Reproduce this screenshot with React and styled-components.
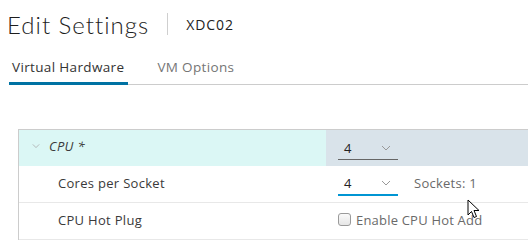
import React from "react";
import styled, { createGlobalStyle } from "styled-components";

const Global = createGlobalStyle`
  html, body { margin: 0; padding: 0; background: #fff; }
  body { font-family: "Open Sans", Lato, sans-serif; overflow: hidden; width: 528px; height: 246px; }
`;

const Page = styled.div`
  position: relative;
  width: 528px;
  height: 246px;
  overflow: hidden;
`;

const Header = styled.div`
  display: flex;
  align-items: center;
  height: 44px;
  padding: 4px 0 0 7px;
  box-sizing: border-box;
`;

const Title = styled.h1`
  margin: 0;
  font-family: Lato, sans-serif;
  font-size: 24px;
  font-weight: 300;
  color: #1d1d1d;
  letter-spacing: 1px;
`;

const Divider = styled.span`
  width: 1px;
  height: 22px;
  background: #cfcfcf;
  margin: 0 18px 0 18px;
`;

const Sub = styled.span`
  font-size: 14px;
  color: #222;
  letter-spacing: 0.9px;
  margin-top: 1px;
`;

const Tabs = styled.div`
  display: flex;
  margin: 12px 0 0 9px;
  border-bottom: 1px solid #cccccc;
  height: 28px;
  align-items: stretch;
`;

const Tab = styled.div`
  font-size: 13.5px;
  padding: 2px 4px 0 3px;
  margin-right: 26px;
  color: ${(p) => (p.$active ? "#333" : "#757575")};
  box-shadow: ${(p) => (p.$active ? "inset 0 -3px 0 #0072a3" : "none")};
  margin-bottom: -1px;
  letter-spacing: 0.35px;
`;

const Table = styled.div`
  margin: 44px 0 0 18px;
  width: 560px;
  border-top: 1px solid #cccccc;
  border-left: 1px solid #cccccc;
`;

const Row = styled.div`
  display: grid;
  grid-template-columns: 307px 1fr;
  height: 36px;
  border-bottom: ${(p) => (p.$head ? "none" : "1px solid #e8e8e8")};
`;

const Label = styled.div`
  display: flex;
  align-items: center;
  padding-left: ${(p) => (p.$head ? "13px" : "39px")};
  padding-bottom: ${(p) => (p.$head ? "4px" : "3px")};
  font-size: 13px;
  color: #3a3a3a;
  letter-spacing: 0.3px;
  font-style: ${(p) => (p.$head ? "italic" : "normal")};
  background: ${(p) => (p.$head ? "#dbf7f5" : "transparent")};
  gap: 9px;
`;

const Value = styled.div`
  display: flex;
  align-items: center;
  padding-left: 12px;
  gap: 16px;
  background: ${(p) => (p.$head ? "#d9e3ea" : "transparent")};
`;

const Select = styled.div`
  width: 60px;
  height: 22px;
  box-sizing: border-box;
  display: flex;
  align-items: center;
  justify-content: space-between;
  padding: 0 7px 1px 6px;
  font-size: 13px;
  color: #222;
  border-bottom: ${(p) => (p.$focus ? "2px solid #0095d3" : "1px solid #666")};
  margin-top: ${(p) => (p.$focus ? "1px" : "2px")};
`;

const Note = styled.span`
  font-size: 13px;
  color: #6a6a6a;
  letter-spacing: 0.25px;
  margin-bottom: 3px;
`;

const CheckWrap = styled.label`
  display: flex;
  align-items: center;
  gap: 5px;
  font-size: 13px;
  color: #6a6a6a;
  margin-bottom: 2px;
  letter-spacing: 0.2px;
`;

const Box = styled.span`
  width: 11px;
  height: 11px;
  border: 1px solid #9a9a9a;
  border-radius: 3px;
  background: linear-gradient(#fafafa, #e6e6e6);
  margin-top: -2px;
`;

const Cursor = styled.svg`
  position: absolute;
  left: 467px;
  top: 199px;
`;

const Chevron = ({ color = "#999", size = 10 }) => (
  <svg width={size} height={6} viewBox="0 0 10 6">
    <path d="M1 1 L5 5 L9 1" fill="none" stroke={color} strokeWidth="1" />
  </svg>
);

export default function App() {
  return (
    <Page>
      <Global />
      <Header>
        <Title>Edit Settings</Title>
        <Divider />
        <Sub>XDC02</Sub>
      </Header>
      <Tabs>
        <Tab $active>Virtual Hardware</Tab>
        <Tab>VM Options</Tab>
      </Tabs>
      <Table>
        <Row $head>
          <Label $head>
            <Chevron color="#aaa" size={8} />
            CPU *
          </Label>
          <Value $head>
            <Select>
              4
              <Chevron />
            </Select>
          </Value>
        </Row>
        <Row>
          <Label>Cores per Socket</Label>
          <Value>
            <Select $focus>
              4
              <Chevron />
            </Select>
            <Note>Sockets: 1</Note>
          </Value>
        </Row>
        <Row>
          <Label>CPU Hot Plug</Label>
          <Value>
            <CheckWrap>
              <Box />
              Enable CPU Hot Add
            </CheckWrap>
          </Value>
        </Row>
      </Table>
      <Cursor width="14" height="20" viewBox="0 0 14 20">
        <path d="M1 1 L1 16 L4.5 12.5 L7 18.5 L9.5 17.5 L7 11.5 L12 11.5 Z" fill="#fff" stroke="#000" strokeWidth="1" strokeLinejoin="round" />
      </Cursor>
    </Page>
  );
}
